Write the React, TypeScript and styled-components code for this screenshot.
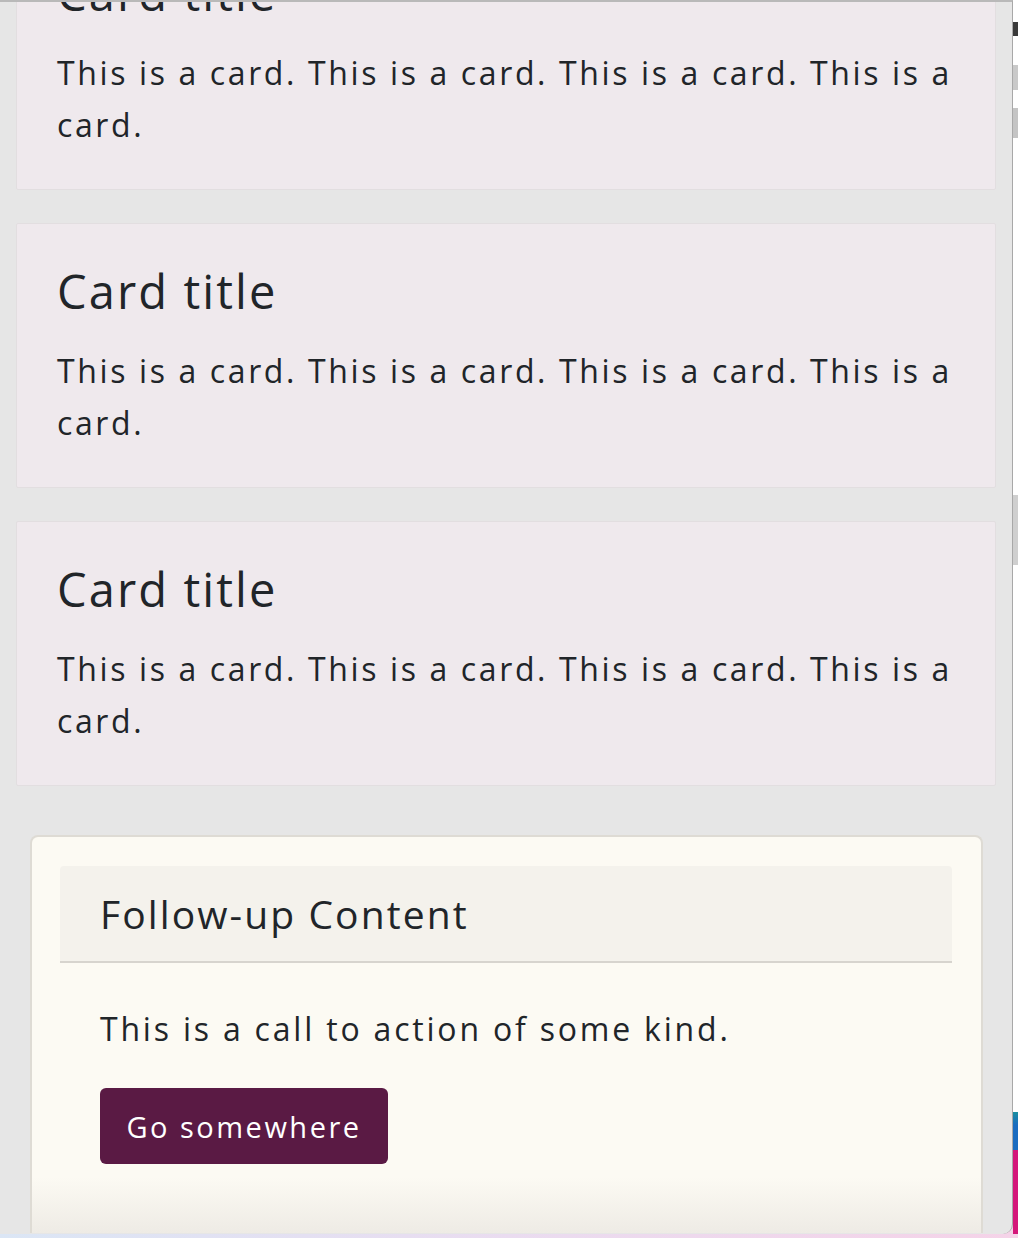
import React from 'react'
import styled, {createGlobalStyle} from 'styled-components'

const GlobalStyle = createGlobalStyle`
    html, body {
        margin: 0;
        padding: 0;
        overflow: hidden;
    }
    body {
        font-family: "Open Sans", "Liberation Sans", sans-serif;
        color: #212529;
    }
`;

const Desktop = styled.div`
    display: flex;
    flex-direction: column;
    width: 1018px;
    height: 1238px;
    background: linear-gradient(90deg, #dbe6f5 0%, #eadcf0 50%, #f5d3e8 100%);
    overflow: hidden;
`;

const DesktopRow = styled.div`
    display: flex;
    flex-direction: row;
    height: 1234px;
`;

const Window = styled.div`
    display: flex;
    flex-direction: column;
    width: 1013px;
    height: 1234px;
    box-sizing: border-box;
    background: #e6e6e6;
    border-top: 2px solid #b9b9b9;
    border-right: 1px solid #a8a8a8;
    border-bottom-right-radius: 10px;
    overflow: hidden;
`;

const Content = styled.div`
    display: flex;
    flex-direction: column;
    gap: 33px;
    padding: 0 16px 0 16px;
`;

const SideStrip = styled.div`
    flex: 1;
    background: linear-gradient(180deg,
        #ffffff 0px, #ffffff 22px, #3a3a3a 22px, #3a3a3a 36px,
        #ffffff 36px, #ffffff 65px, #c9c9c9 65px, #c9c9c9 90px,
        #ffffff 90px, #ffffff 108px, #c4c4c4 108px, #c4c4c4 138px,
        #ffffff 138px, #ffffff 495px, #cfcfcf 495px, #cfcfcf 565px,
        #ffffff 565px, #ffffff 1112px, #1a8fa0 1112px, #1a6cc0 1125px,
        #1a6cc0 1150px, #d4177a 1150px, #d4177a 100%);
`;

const Card = styled.div<{ $cut?: boolean }>`
    background: #efe9ed;
    border: 1px solid #e2dee0;
    border-radius: 2px;
    height: 265px;
    box-sizing: border-box;
    padding: 37px 40px 0;
    margin-top: ${p => (p.$cut ? '-77px' : '0')};
`;

const CardTitle = styled.h5`
    margin: 0 0 24px;
    font-size: 47px;
    font-weight: 400;
    line-height: 60px;
    letter-spacing: 2.1px;
`;

const CardText = styled.p`
    margin: 0;
    font-size: 32px;
    line-height: 52px;
    letter-spacing: 2.62px;
`;

const FollowUp = styled.div`
    margin: 49px 29px 0 30px;
    height: 398px;
    box-sizing: border-box;
    background: linear-gradient(180deg, #fcfaf3 0%, #fcfaf3 86%, #eeebe5 100%);
    border: 2px solid #dedbd4;
    border-bottom: none;
    border-radius: 8px 8px 0 0;
    padding: 29px 29px 0 28px;
`;

const FollowHeader = styled.div`
    background: #f4f2ec;
    border-bottom: 2px solid #d7d4ce;
    border-radius: 4px 4px 0 0;
    padding: 0 40px;
    height: 97px;
    box-sizing: border-box;
    display: flex;
    align-items: center;
`;

const FollowTitle = styled.h4`
    margin: 0;
    font-size: 39px;
    font-weight: 400;
    letter-spacing: 2.1px;
`;

const FollowBody = styled.div`
    padding: 40px 40px 0;
    display: flex;
    flex-direction: column;
    align-items: flex-start;
    gap: 33px;
`;

const FollowText = styled.p`
    margin: 0;
    font-size: 32px;
    line-height: 52px;
    letter-spacing: 2.8px;
`;

const Button = styled.button`
    background: #5a1a44;
    color: #ffffff;
    border: none;
    border-radius: 6px;
    width: 288px;
    height: 76px;
    padding: 0;
    font-family: inherit;
    font-size: 29px;
    letter-spacing: 2.5px;
    cursor: pointer;
`;

const cardText = 'This is a card. This is a card. This is a card. This is a card.'

export default function App() {
    return (
        <>
            <GlobalStyle />
            <Desktop>
                <DesktopRow>
                    <Window>
                        <Content>
                            {[0, 1, 2].map(i => (
                                <Card key={i} $cut={i === 0}>
                                    <CardTitle>Card title</CardTitle>
                                    <CardText>{cardText}</CardText>
                                </Card>
                            ))}
                        </Content>
                        <FollowUp>
                            <FollowHeader>
                                <FollowTitle>Follow-up Content</FollowTitle>
                            </FollowHeader>
                            <FollowBody>
                                <FollowText>This is a call to action of some kind.</FollowText>
                                <Button>Go somewhere</Button>
                            </FollowBody>
                        </FollowUp>
                    </Window>
                    <SideStrip />
                </DesktopRow>
            </Desktop>
        </>
    )
}
